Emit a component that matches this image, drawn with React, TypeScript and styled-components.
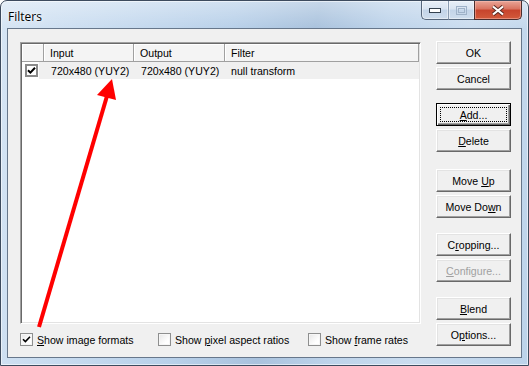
import React from "react";
import styled, { createGlobalStyle } from "styled-components";

const GlobalStyle = createGlobalStyle`
  html, body {
    margin: 0;
    padding: 0;
    background: #fff;
    overflow: hidden;
  }
  body {
    font-family: "Liberation Sans", Arial, sans-serif;
  }
`;

const Window = styled.div`
  position: relative;
  box-sizing: border-box;
  width: 529px;
  height: 366px;
  border: 1px solid #3d4b5e;
  border-radius: 7px 7px 0 0;
  background:
    linear-gradient(to bottom, rgba(255, 255, 255, 0.35), rgba(255, 255, 255, 0) 28px),
    linear-gradient(100deg, #d6e5f4 0%, #c6daef 22%, #b8d0e9 40%, #a9c2dd 54%, #bdd3ea 66%, #cadcef 80%, #bcd3ea 100%);
  box-shadow: inset 0 0 0 1px rgba(255, 255, 255, 0.55);
  display: flex;
  flex-direction: column;
  overflow: hidden;
`;

const TitleBar = styled.div`
  height: 27px;
  display: flex;
  justify-content: space-between;
  align-items: flex-start;
  padding: 0 6px 0 7px;
`;

const Title = styled.div`
  padding-top: 7px;
  font: 12px "Open Sans", "Noto Sans", sans-serif;
  color: #000;
  text-shadow: 0 0 6px rgba(255, 255, 255, 0.9), 0 0 2px rgba(255, 255, 255, 0.9);
`;

const CaptionGroup = styled.div`
  display: flex;
  height: 19px;
`;

const GlassButton = styled.div<{ $w: number; $first?: boolean }>`
  box-sizing: border-box;
  width: ${(p) => p.$w}px;
  height: 19px;
  display: flex;
  align-items: center;
  justify-content: center;
  border: 1px solid #56667b;
  border-top: none;
  border-left: ${(p) => (p.$first ? "1px solid #56667b" : "1px solid #8c9db2")};
  border-radius: ${(p) => (p.$first ? "0 0 0 5px" : "0")};
  border-right: none;
  background: linear-gradient(to bottom, #e8eff8 0%, #d9e4f1 45%, #c3d4e8 50%, #cfdded 100%);
  box-shadow: inset 0 0 0 1px rgba(255, 255, 255, 0.45);
`;

const CloseButton = styled.div`
  box-sizing: border-box;
  width: 48px;
  height: 19px;
  display: flex;
  align-items: center;
  justify-content: center;
  border: 1px solid #4a2d2d;
  border-top: none;
  border-radius: 0 0 5px 0;
  background: linear-gradient(to bottom, #e9a597 0%, #d9725f 45%, #c7432c 50%, #d25a3b 100%);
  box-shadow: inset 0 0 0 1px rgba(255, 200, 190, 0.45);
`;

const Client = styled.div`
  box-sizing: border-box;
  margin: 0 6px;
  height: 330px;
  border: 1px solid #67778b;
  background: #f0f0f0;
  display: flex;
  padding: 12px 9px 0 12px;
  gap: 15px;
`;

const LeftColumn = styled.div`
  width: 401px;
  display: flex;
  flex-direction: column;
`;

const ListView = styled.div`
  box-sizing: border-box;
  margin-top: 1px;
  width: 401px;
  height: 282px;
  background: #fff;
  border: 1px solid;
  border-color: #a0a0a0 #fff #fff #a0a0a0;
  box-shadow: inset 1px 1px 0 #696969, inset -1px -1px 0 #e3e3e3;
  padding: 1px;
`;

const HeaderRow = styled.div`
  display: grid;
  grid-template-columns: 22px 90px 91px 1fr;
  height: 18px;
  background: #f4f4f4;
`;

const HeaderCell = styled.div`
  box-sizing: border-box;
  border-right: 1px solid #a0a0a0;
  border-bottom: 1px solid #a0a0a0;
  box-shadow: inset 1px 1px 0 #fff;
  padding-left: 6px;
  display: flex;
  align-items: center;
  font-size: 10.6px;
  color: #000;
`;

const Row = styled.div`
  display: grid;
  grid-template-columns: 22px 90px 91px 1fr;
  height: 17px;
`;

const CheckCell = styled.div`
  display: flex;
  align-items: center;
  padding-left: 3px;
  background: linear-gradient(to right, transparent 17px, #f0f0f0 17px);
`;

const Cell = styled.div<{ $pad?: number }>`
  display: flex;
  align-items: center;
  padding-left: ${(p) => p.$pad ?? 7}px;
  background: #f0f0f0;
  font-size: 10.6px;
  color: #000;
  white-space: nowrap;
`;

const ClassicBox = styled.div`
  box-sizing: border-box;
  width: 13px;
  height: 13px;
  border: 2px solid #8a8a8a;
  background: #fff;
  display: flex;
  align-items: center;
  justify-content: center;
`;

const OptionsRow = styled.div`
  display: flex;
  margin-top: 9px;
  height: 13px;
  align-items: center;
`;

const Option = styled.label<{ $w?: number }>`
  display: flex;
  align-items: center;
  gap: 4px;
  width: ${(p) => (p.$w ? `${p.$w}px` : "auto")};
  font-size: 10.6px;
  color: #000;
  white-space: nowrap;
`;

const AeroBox = styled.div`
  box-sizing: border-box;
  width: 13px;
  height: 13px;
  border: 1px solid #8e8f8f;
  background: linear-gradient(135deg, #e6e6e6 0%, #fff 70%);
  box-shadow: inset 0 0 0 1px #f6f6f6;
  display: flex;
  align-items: center;
  justify-content: center;
`;

const ButtonColumn = styled.div`
  width: 75px;
  display: flex;
  flex-direction: column;
`;

const Button = styled.div<{ $gap?: number; $focused?: boolean; $disabled?: boolean }>`
  position: relative;
  box-sizing: border-box;
  width: 75px;
  height: 23px;
  margin-top: ${(p) => p.$gap ?? 3}px;
  display: flex;
  align-items: center;
  justify-content: center;
  background: #f0f0f0;
  border: 1px solid;
  border-color: ${(p) => (p.$focused ? "#000" : "#fff #696969 #696969 #fff")};
  box-shadow: ${(p) =>
    p.$focused
      ? "inset 1px 1px 0 #fff, inset -1px -1px 0 #696969, inset -2px -2px 0 #a0a0a0"
      : "inset -1px -1px 0 #a0a0a0, inset 1px 1px 0 #e3e3e3"};
  font-size: 10.6px;
  color: ${(p) => (p.$disabled ? "#a0a0a0" : "#000")};
  &::after {
    content: "";
    display: ${(p) => (p.$focused ? "block" : "none")};
    position: absolute;
    inset: 3px;
    border: 1px dotted #000;
  }
`;

const ArrowLayer = styled.svg`
  position: absolute;
  left: -1px;
  top: -1px;
  pointer-events: none;
`;

const Check = ({ bold }: { bold?: boolean }) => (
  <svg width="9" height="9" viewBox="0 0 9 9">
    <path
      d="M1 4.2 L3.4 6.6 L8 1.8"
      fill="none"
      stroke="#000"
      strokeWidth={bold ? 2 : 1.6}
    />
  </svg>
);

export default function App() {
  return (
    <>
      <GlobalStyle />
      <Window>
        <TitleBar>
          <Title>Filters</Title>
          <CaptionGroup>
            <GlassButton $w={27} $first>
              <svg width="12" height="5" viewBox="0 0 12 5">
                <rect x="0.5" y="0.5" width="11" height="4" fill="#fff" stroke="#34414f" />
              </svg>
            </GlassButton>
            <GlassButton $w={26}>
              <svg width="11" height="9" viewBox="0 0 11 9">
                <rect x="0.5" y="0.5" width="10" height="8" fill="none" stroke="#9fb2c8" />
                <rect x="2.5" y="2.5" width="6" height="4" fill="none" stroke="#9fb2c8" />
              </svg>
            </GlassButton>
            <CloseButton>
              <svg width="14" height="11" viewBox="0 0 14 11">
                <path d="M2 1.5 L12 9.5 M12 1.5 L2 9.5" stroke="#5a2a22" strokeWidth="4" />
                <path d="M2 1.5 L12 9.5 M12 1.5 L2 9.5" stroke="#fff" strokeWidth="2.2" />
              </svg>
            </CloseButton>
          </CaptionGroup>
        </TitleBar>

        <Client>
          <LeftColumn>
            <ListView>
              <HeaderRow>
                <HeaderCell />
                <HeaderCell>Input</HeaderCell>
                <HeaderCell>Output</HeaderCell>
                <HeaderCell>Filter</HeaderCell>
              </HeaderRow>
              <Row>
                <CheckCell>
                  <ClassicBox>
                    <Check bold />
                  </ClassicBox>
                </CheckCell>
                <Cell>720x480 (YUY2)</Cell>
                <Cell>720x480 (YUY2)</Cell>
                <Cell $pad={6}>null transform</Cell>
              </Row>
            </ListView>
            <OptionsRow>
              <Option $w={138}>
                <AeroBox>
                  <Check />
                </AeroBox>
                <span>
                  <u>S</u>how image formats
                </span>
              </Option>
              <Option $w={150}>
                <AeroBox />
                <span>
                  Show <u>p</u>ixel aspect ratios
                </span>
              </Option>
              <Option>
                <AeroBox />
                <span>
                  Show <u>f</u>rame rates
                </span>
              </Option>
            </OptionsRow>
          </LeftColumn>

          <ButtonColumn>
            <Button $gap={0}>OK</Button>
            <Button>Cancel</Button>
            <Button $gap={13} $focused>
              <span>
                <u>A</u>dd...
              </span>
            </Button>
            <Button>
              <span>
                <u>D</u>elete
              </span>
            </Button>
            <Button $gap={17}>
              <span>
                Move <u>U</u>p
              </span>
            </Button>
            <Button>
              <span>
                Move Do<u>w</u>n
              </span>
            </Button>
            <Button $gap={15}>
              <span>
                C<u>r</u>opping...
              </span>
            </Button>
            <Button $disabled>
              <span>
                <u>C</u>onfigure...
              </span>
            </Button>
            <Button $gap={15}>
              <span>
                <u>B</u>lend
              </span>
            </Button>
            <Button>
              <span>
                O<u>p</u>tions...
              </span>
            </Button>
          </ButtonColumn>
        </Client>

        <ArrowLayer width="529" height="366" viewBox="0 0 529 366">
          <line x1="39" y1="327" x2="107" y2="96" stroke="#ff0000" strokeWidth="4" />
          <polygon points="112,79 97,95 116,100" fill="#ff0000" />
        </ArrowLayer>
      </Window>
    </>
  );
}
